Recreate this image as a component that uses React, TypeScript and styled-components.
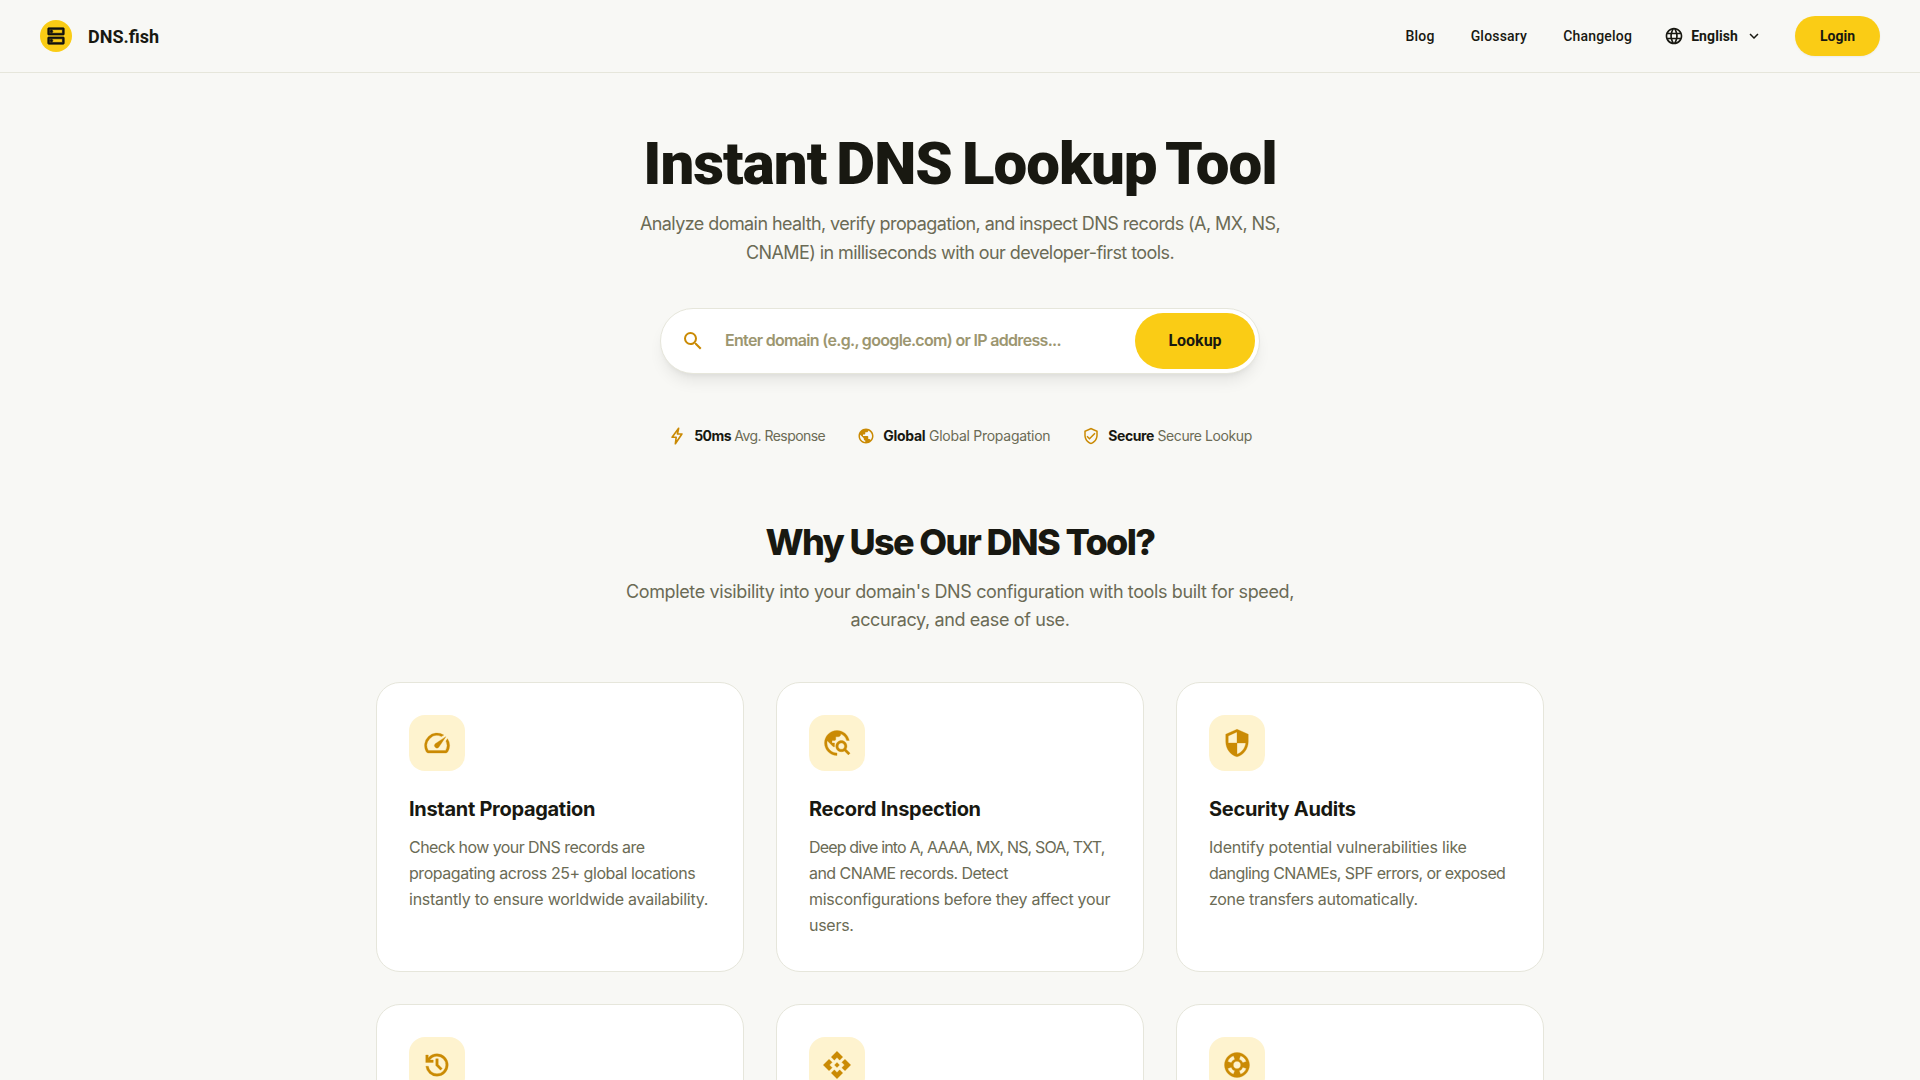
import React from "react";
import styled, { createGlobalStyle } from "styled-components";
import {
  MdApi,
  MdExpandMore,
  MdLanguage,
  MdOutlineDns,
  MdOutlineVerifiedUser,
  MdPublic,
  MdSearch,
  MdSecurity,
  MdSpeed,
  MdSupport,
  MdTravelExplore,
} from "react-icons/md";

const GlobalStyle = createGlobalStyle`
  html, body {
    margin: 0;
    height: 100%;
    overflow: hidden;
    background: #f8f8f5;
  }
  body {
    font-family: Inter, "Liberation Sans", sans-serif;
    color: #181811;
  }
  * {
    box-sizing: border-box;
  }
`;

type Feature = {
  title?: string;
  lines?: Array<[string, number]>;
  icon: React.ReactNode;
};

function BoltIcon() {
  return (
    <svg width="18" height="18" viewBox="2 1 20 22" fill="none">
      <path
        d="M14 2.5 6 13.5h5l-1 8 8-12h-5.5z"
        stroke="currentColor"
        strokeWidth="2"
        strokeLinejoin="round"
      />
    </svg>
  );
}

function HistoryIcon() {
  return (
    <svg width="1em" height="1em" viewBox="0 0 24 24" fill="currentColor">
      <path d="M12 21q-3.45 0-6.01-2.29T3.05 13H5.1q.35 2.6 2.31 4.3T12 19q2.93 0 4.96-2.04T19 12q0-2.93-2.04-4.96T12 5q-1.73 0-3.23.8T6.25 8H9v2H3V4h2v2.35q1.28-1.6 3.11-2.48T12 3q3.75 0 6.38 2.63T21 12q0 3.75-2.62 6.38T12 21Zm2.8-4.8L11 12.4V7h2v4.6l3.2 3.2-1.4 1.4Z" />
    </svg>
  );
}

// text + letter spacing per line, the wraps are the ones of the design
const features: Array<Feature> = [
  {
    title: "Instant Propagation",
    lines: [
      ["Check how your DNS records are", -0.56],
      ["propagating across 25+ global locations", -0.46],
      ["instantly to ensure worldwide availability.", -0.25],
    ],
    icon: <MdSpeed />,
  },
  {
    title: "Record Inspection",
    lines: [
      ["Deep dive into A, AAAA, MX, NS, SOA, TXT,", -0.85],
      ["and CNAME records. Detect", -0.55],
      ["misconfigurations before they affect your", -0.27],
      ["users.", -0.27],
    ],
    icon: <MdTravelExplore />,
  },
  {
    title: "Security Audits",
    lines: [
      ["Identify potential vulnerabilities like", -0.2],
      ["dangling CNAMEs, SPF errors, or exposed", -0.6],
      ["zone transfers automatically.", -0.3],
    ],
    icon: <MdSecurity />,
  },
  { icon: <HistoryIcon /> },
  { icon: <MdApi /> },
  { icon: <MdSupport /> },
];

function App() {
  return (
    <>
      <GlobalStyle />
      <Header>
        <Brand>
          <LogoMark>
            <MdOutlineDns />
          </LogoMark>
          <BrandName>DNS.fish</BrandName>
        </Brand>
        <Nav>
          <NavLink>Blog</NavLink>
          <NavLink>Glossary</NavLink>
          <NavLink>Changelog</NavLink>
          <LangPicker>
            <MdLanguage size={20} />
            <span>English</span>
            <MdExpandMore size={18} />
          </LangPicker>
          <LoginButton>Login</LoginButton>
        </Nav>
      </Header>
      <Main>
        <Title>Instant DNS Lookup Tool</Title>
        <Lead>
          Analyze domain health, verify propagation, and inspect DNS records (A,
          MX, NS, CNAME) in milliseconds with our developer-first tools.
        </Lead>
        <SearchForm>
          <SearchIcon>
            <MdSearch />
          </SearchIcon>
          <SearchInput placeholder="Enter domain (e.g., google.com) or IP address..." />
          <LookupButton>Lookup</LookupButton>
        </SearchForm>
        <Stats>
          <Stat $spacing={-0.55}>
            <BoltIcon />
            <span>
              <b>50ms</b> Avg. Response
            </span>
          </Stat>
          <Stat $spacing={-0.27}>
            <MdPublic size={18} />
            <span>
              <b>Global</b> Global Propagation
            </span>
          </Stat>
          <Stat $spacing={-0.42}>
            <MdOutlineVerifiedUser size={18} />
            <span>
              <b>Secure</b> Secure Lookup
            </span>
          </Stat>
        </Stats>
        <SectionTitle>Why Use Our DNS Tool?</SectionTitle>
        <SectionLead>
          Complete visibility into your domain's DNS configuration with tools
          built for speed, accuracy, and ease of use.
        </SectionLead>
        <CardGrid>
          {features.map((item, i) => (
            <Card key={i}>
              <IconTile>{item.icon}</IconTile>
              {item.title && <CardTitle>{item.title}</CardTitle>}
              {item.lines && (
                <CardText>
                  {item.lines.map(([text, spacing]) => (
                    <CardLine key={text} $spacing={spacing}>
                      {text}
                    </CardLine>
                  ))}
                </CardText>
              )}
            </Card>
          ))}
        </CardGrid>
      </Main>
    </>
  );
}

export default App;

export const Header = styled.header`
  height: 73px;
  padding: 0 40px;
  display: flex;
  align-items: center;
  justify-content: space-between;
  border-bottom: 1px solid #e6e6db;
`;

export const Brand = styled.div`
  display: flex;
  align-items: center;
  gap: 16px;
`;

export const LogoMark = styled.div`
  width: 32px;
  height: 32px;
  border-radius: 50%;
  background: #facc15;
  display: flex;
  align-items: center;
  justify-content: center;
  font-size: 22px;
  color: #111;

  svg path:not([fill="none"]) {
    stroke: currentColor;
    stroke-width: 0.7px;
  }
`;

export const BrandName = styled.span`
  font-family: Roboto, sans-serif;
  font-size: 18px;
  font-weight: 700;
`;

export const Nav = styled.nav`
  display: flex;
  align-items: center;
`;

export const NavLink = styled.a`
  font-family: Roboto, sans-serif;
  font-size: 14px;
  font-weight: 500;
  letter-spacing: 0.2px;
  margin-right: 36px;

  &:last-of-type {
    margin-right: 32px;
  }
`;

export const LangPicker = styled.div`
  display: flex;
  align-items: center;
  gap: 7px;
  font-family: Roboto, sans-serif;
  font-size: 14px;
  font-weight: 700;
  letter-spacing: 0.1px;
  margin-right: 32px;
`;

export const LoginButton = styled.button`
  width: 85px;
  height: 40px;
  border: 0;
  border-radius: 20px;
  background: #facc15;
  color: #181811;
  font-family: Roboto, sans-serif;
  font-size: 14px;
  font-weight: 700;
  box-shadow: 0 1px 2px rgba(0, 0, 0, 0.05);
`;

export const Main = styled.main`
  width: 1168px;
  margin: 0 auto;
  display: flex;
  flex-direction: column;
  align-items: center;
`;

export const Title = styled.h1`
  margin: 58px 0 0;
  font-family: Roboto, sans-serif;
  font-size: 60px;
  line-height: 66px;
  font-weight: 900;
  letter-spacing: -0.95px;
  word-spacing: -4px;
  text-align: center;
`;

export const Lead = styled.p`
  width: 672px;
  margin: 12px 0 0;
  font-size: 18px;
  line-height: 29px;
  letter-spacing: -0.58px;
  color: #6b6b55;
  text-align: center;
`;

export const SearchForm = styled.div`
  width: 600px;
  height: 66px;
  margin-top: 41px;
  padding: 4px;
  display: flex;
  align-items: center;
  background: #fff;
  border: 1px solid #e6e6db;
  border-radius: 33px;
  box-shadow: 0 10px 15px -3px rgba(0, 0, 0, 0.08),
    0 4px 6px -4px rgba(0, 0, 0, 0.08);
`;

export const SearchIcon = styled.div`
  width: 54px;
  padding-left: 2px;
  display: flex;
  justify-content: center;
  font-size: 24px;
  color: #ca8a04;
`;

export const SearchInput = styled.input`
  flex: 1;
  min-width: 0;
  height: 100%;
  margin-left: 6px;
  padding: 0 0 2px;
  border: 0;
  outline: 0;
  background: transparent;
  font-family: Inter, sans-serif;
  font-size: 16px;
  font-weight: 600;
  letter-spacing: -0.68px;
  color: #181811;

  &::placeholder {
    color: #9c9670;
    opacity: 1;
  }
`;

export const LookupButton = styled.button`
  width: 120px;
  height: 56px;
  padding: 0 0 1px;
  border: 0;
  border-radius: 28px;
  background: #facc15;
  color: #181811;
  font-family: Roboto, sans-serif;
  font-size: 16px;
  font-weight: 700;
`;

export const Stats = styled.div`
  margin-top: 52px;
  display: flex;
  align-items: center;
  gap: 32px;
`;

export const Stat = styled.div<{ $spacing: number }>`
  display: flex;
  align-items: center;
  gap: 8px;
  font-size: 14px;
  line-height: 20px;
  letter-spacing: ${(props) => props.$spacing}px;
  color: #6b6b55;

  svg {
    color: #ca8a04;
  }

  b {
    color: #181811;
    font-weight: 700;
  }
`;

export const SectionTitle = styled.h2`
  margin: 76px 0 0;
  font-size: 36px;
  line-height: 40px;
  font-weight: 800;
  letter-spacing: -1.6px;
  text-align: center;
`;

export const SectionLead = styled.p`
  width: 672px;
  margin: 16px 0 0;
  font-size: 18px;
  line-height: 28px;
  letter-spacing: -0.37px;
  color: #6b6b55;
  text-align: center;
`;

export const CardGrid = styled.div`
  width: 100%;
  margin-top: 48px;
  display: grid;
  grid-template-columns: repeat(3, 1fr);
  gap: 32px;
`;

export const Card = styled.div`
  min-height: 290px;
  padding: 32px;
  background: #fff;
  border: 1px solid #e6e6db;
  border-radius: 24px;
`;

export const IconTile = styled.div`
  width: 56px;
  height: 56px;
  border-radius: 16px;
  background: #fef3cf;
  display: flex;
  align-items: center;
  justify-content: center;
  font-size: 30px;
  color: #ca8a04;

  svg path:not([fill="none"]) {
    stroke: currentColor;
    stroke-width: 0.25px;
  }
`;

export const CardTitle = styled.h3`
  margin: 24px 0 0;
  font-size: 20px;
  line-height: 28px;
  font-weight: 700;
  letter-spacing: -0.3px;
`;

export const CardText = styled.p`
  margin: 11px 0 0;
  font-size: 16px;
  line-height: 26px;
  color: #6b6b55;
`;

export const CardLine = styled.span<{ $spacing: number }>`
  display: block;
  white-space: nowrap;
  letter-spacing: ${(props) => props.$spacing}px;
`;
